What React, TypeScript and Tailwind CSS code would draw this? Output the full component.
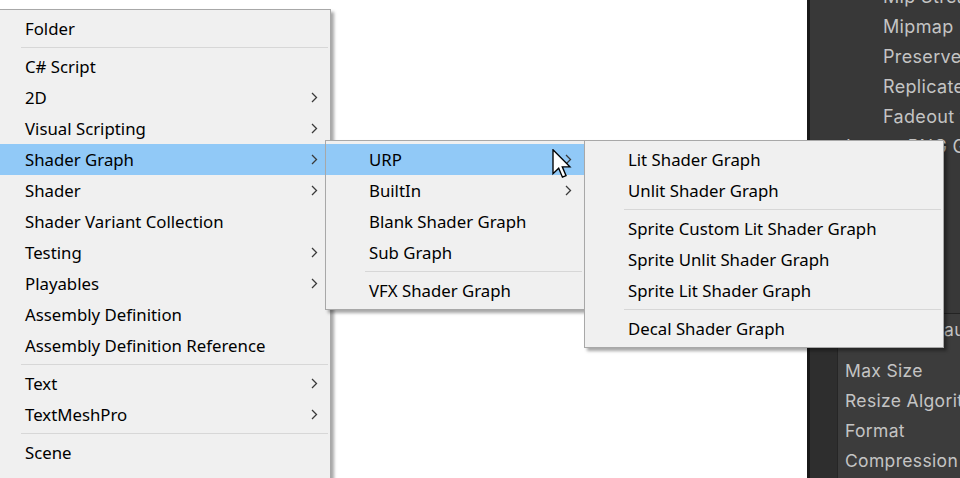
import React from "react";

type Item = { label?: string; sub?: boolean; sep?: boolean; hi?: boolean };

const Chevron = () => (
  <svg width="7" height="11" viewBox="0 0 7 11" className="shrink-0">
    <polyline points="1,1 5.5,5.5 1,10" fill="none" stroke="#3a3a3a" strokeWidth="1.3" />
  </svg>
);

function Menu({
  items,
  iconCol,
  sepLeft,
  className,
}: {
  items: Item[];
  iconCol: number;
  sepLeft: number;
  className: string;
}) {
  return (
    <div
      className={
        "absolute bg-[#f0f0f0] border border-[#a8a8a8] py-[3px] shadow-[3px_3px_3px_rgba(0,0,0,0.35)] " +
        className
      }
    >
      {items.map((it, i) =>
        it.sep ? (
          <div key={i} className="h-[7px] flex items-center" style={{ paddingLeft: sepLeft }}>
            <div className="h-px w-full bg-[#d7d7d7] mr-[2px]" />
          </div>
        ) : (
          <div
            key={i}
            className={
              "h-[31px] flex items-center pr-[12px] " + (it.hi ? "bg-[#91c9f7]" : "")
            }
            style={{ paddingLeft: iconCol }}
          >
            <span className="flex-1 whitespace-nowrap text-black">{it.label}</span>
            {it.sub && <Chevron />}
          </div>
        )
      )}
    </div>
  );
}

const mainItems: Item[] = [
  { label: "Folder" },
  { sep: true },
  { label: "C# Script" },
  { label: "2D", sub: true },
  { label: "Visual Scripting", sub: true },
  { label: "Shader Graph", sub: true, hi: true },
  { label: "Shader", sub: true },
  { label: "Shader Variant Collection" },
  { label: "Testing", sub: true },
  { label: "Playables", sub: true },
  { label: "Assembly Definition" },
  { label: "Assembly Definition Reference" },
  { sep: true },
  { label: "Text", sub: true },
  { label: "TextMeshPro", sub: true },
  { sep: true },
  { label: "Scene" },
  { label: "Scene Template" },
];

const sub1: Item[] = [
  { label: "URP", sub: true, hi: true },
  { label: "BuiltIn", sub: true },
  { label: "Blank Shader Graph" },
  { label: "Sub Graph" },
  { sep: true },
  { label: "VFX Shader Graph" },
];

const sub2: Item[] = [
  { label: "Lit Shader Graph" },
  { label: "Unlit Shader Graph" },
  { sep: true },
  { label: "Sprite Custom Lit Shader Graph" },
  { label: "Sprite Unlit Shader Graph" },
  { label: "Sprite Lit Shader Graph" },
  { sep: true },
  { label: "Decal Shader Graph" },
];

export default function App() {
  return (
    <div
      className="relative w-[960px] h-[478px] overflow-hidden bg-white flex text-[16.8px]"
      style={{ fontFamily: '"Noto Sans", "Open Sans", sans-serif' }}
    >
      <div className="flex-1 bg-white" />
      {/* dark inspector panel */}
      <div
        className="w-[153px] shrink-0 h-full overflow-hidden border-l-[3px] border-[#191919] bg-[#383838] flex flex-col text-[#c4c4c4] tracking-[0.02em]"
        style={{ fontFamily: "Inter, sans-serif" }}
      >
        <div className="flex flex-col mt-[-19px] pl-[73px] whitespace-nowrap text-[18px]">
          {["Mip Streaming", "Mipmap Limit", "Preserve Coverage", "Replicate Border", "Fadeout to Gray"].map(
            (t) => (
              <div key={t} className="h-[30px] flex items-center">
                {t}
              </div>
            )
          )}
          <div className="h-[30px] flex items-center ml-[-37px]">Ignore PNG Gamma</div>
        </div>
        <div className="flex-1" />
        <div className="h-[165px] shrink-0 flex border-t border-[#232323] text-[17.5px]">
          <div className="w-[28px] shrink-0 bg-[#2e2e2e] border-r border-[#262626]" />
          <div className="flex-1 min-w-0 overflow-hidden bg-[#3c3c3c] flex flex-col whitespace-nowrap pl-[7px]">
            <div className="h-[30px] flex items-center pl-[69px] mt-[1px]">Default</div>
            <div className="h-[11px]" />
            {["Max Size", "Resize Algorithm", "Format", "Compression"].map((t) => (
              <div key={t} className="h-[30px] flex items-center">
                {t}
              </div>
            ))}
          </div>
        </div>
      </div>

      <Menu items={mainItems} iconCol={25} sepLeft={21} className="left-[-1px] top-[9px] w-[332px]" />
      <Menu items={sub1} iconCol={43} sepLeft={39} className="left-[325px] top-[140px] w-[260px]" />
      <Menu items={sub2} iconCol={43} sepLeft={39} className="left-[584px] top-[140px] w-[360px]" />

      {/* mouse cursor */}
      <svg
        className="absolute left-[552px] top-[149px]"
        width="20"
        height="30"
        viewBox="0 0 13 20"
      >
        <path
          d="M0.5,0.5 L0.5,16.5 L4.3,12.8 L6.8,18.8 L9.2,17.8 L6.7,11.9 L11.8,11.9 Z"
          fill="#ffffff"
          stroke="#000000"
          strokeWidth="0.9"
          strokeLinejoin="miter"
        />
      </svg>
    </div>
  );
}
